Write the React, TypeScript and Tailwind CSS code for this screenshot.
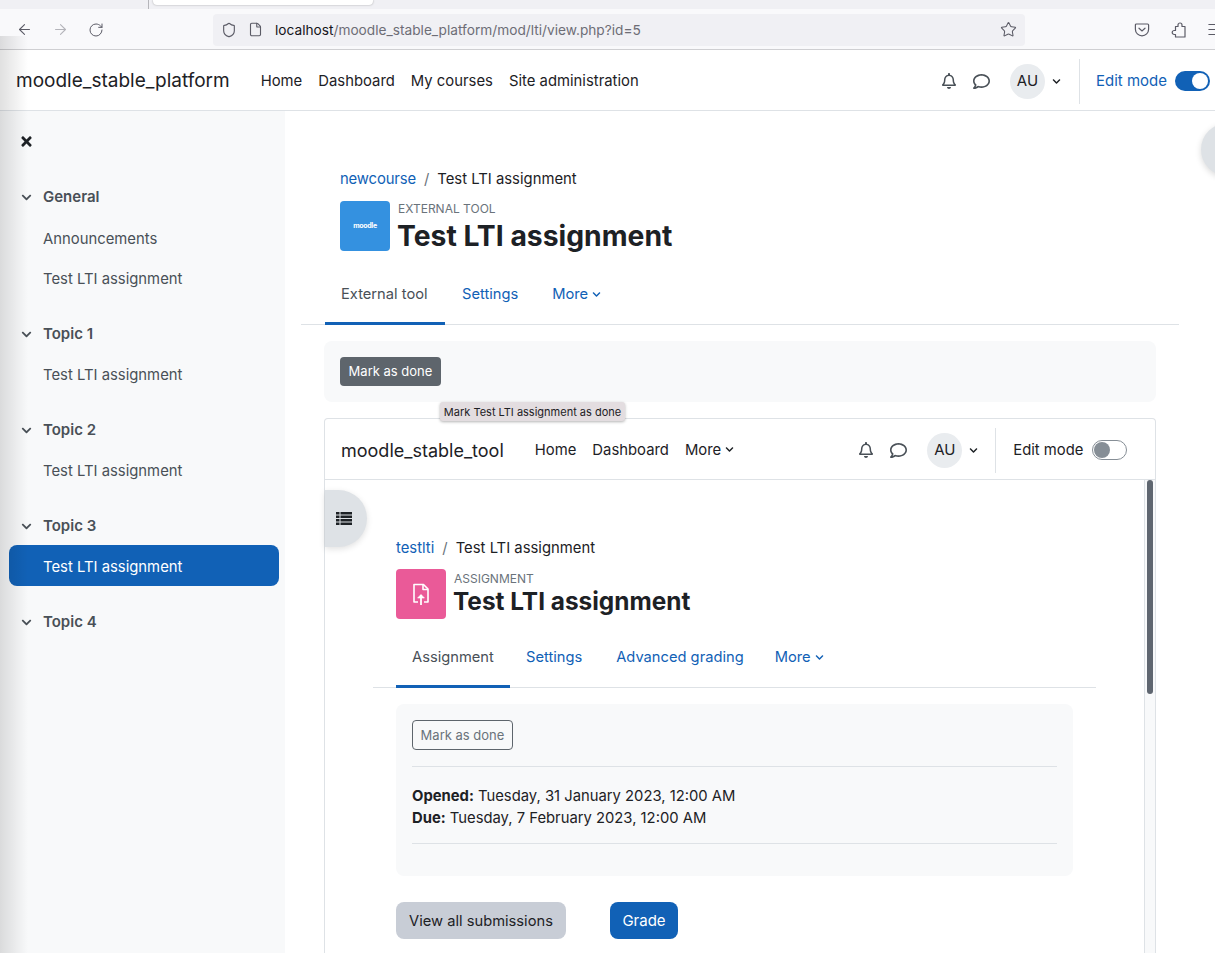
import { ArrowLeft, ArrowRight, File, Menu, RotateCw, Shield, Star } from "lucide-react";
import { FaChevronDown, FaRegBell, FaRegComment, FaTimes } from "react-icons/fa";

const sections = [
  { name: "General", items: ["Announcements", "Test LTI assignment"] },
  { name: "Topic 1", items: ["Test LTI assignment"] },
  { name: "Topic 2", items: ["Test LTI assignment"] },
  { name: "Topic 3", items: ["Test LTI assignment"], active: true },
  { name: "Topic 4", items: [] as string[] },
];

function BrowserBar() {
  return (
    <>
      {/* Tab strip, only the bottom of it is in the picture */}
      <div className="flex h-[9px] bg-[#f0f0f4]">
        <div className="ml-[148px] h-full w-px bg-[#b5b5ba]" />
        <div className="ml-[4px] h-[5px] w-[220px] rounded-b-[4px] bg-white shadow-[0_0_2px_rgba(0,0,0,0.35)]" />
      </div>
      <div className="flex h-[41px] items-center border-b border-[#cfcfd2] bg-[#f9f9fb] pt-px text-[#5b5b66]">
        <ArrowLeft className="ml-[16px] h-[17px] w-[17px] shrink-0" strokeWidth={1.5} />
        <ArrowRight className="ml-[19px] h-[17px] w-[17px] shrink-0 text-[#b4b4ba]" strokeWidth={1.5} />
        <RotateCw className="ml-[19px] h-[16px] w-[16px] shrink-0" strokeWidth={1.5} />
        <div className="ml-[109px] flex h-[32px] w-[812px] shrink-0 items-center rounded-[4px] bg-[#f0f0f4]">
          <Shield className="ml-[8px] h-[16px] w-[16px]" strokeWidth={1.7} />
          <File className="ml-[11px] h-[15px] w-[15px]" strokeWidth={1.8} />
          <span className="ml-[12px] pt-px text-[13.7px] text-[#6d6d76]">
            <span className="text-[#15141a]">localhost</span>/moodle_stable_platform/mod/lti/view.php?id=5
          </span>
          <Star className="ml-auto mr-[8px] h-[17px] w-[17px]" strokeWidth={1.5} />
        </div>
        <svg viewBox="0 0 16 16" className="ml-[109px] h-[16px] w-[16px] shrink-0" fill="none" stroke="currentColor" strokeWidth="1.2">
          <path d="M2.4 2h11.2c.6 0 1 .4 1 1v4.2a6.6 6.6 0 0 1-13.2 0V3c0-.6.4-1 1-1z" />
          <path d="M5 6.2l3 2.8 3-2.8" strokeLinecap="round" />
        </svg>
        <svg viewBox="0 0 16 16" className="ml-[21px] h-[16px] w-[16px] shrink-0" fill="none" stroke="currentColor" strokeWidth="1.2" strokeLinejoin="round">
          <path d="M4.5 4.5H7V3a2 2 0 0 1 4 0v1.5h3V15H4.5v-2.5H3.2a2 2 0 0 1 0-4h1.3z" />
        </svg>
        <Menu className="ml-[19px] h-[17px] w-[17px] shrink-0" strokeWidth={1.5} />
      </div>
    </>
  );
}

function NavIcons() {
  return (
    <>
      <FaRegBell className="h-[16px] w-[16px] text-[#495057]" />
      <FaRegComment className="ml-[16px] h-[17px] w-[17px] text-[#495057]" />
      <div className="ml-[20px] flex h-[35px] w-[35px] items-center justify-center rounded-full bg-[#e9ecef] text-[15px] text-[#1d2125]">
        AU
      </div>
      <FaChevronDown className="ml-[7px] h-[9px] w-[9px] text-[#1d2125]" />
    </>
  );
}

function PageHeader(props: {
  crumb: string;
  crumbClass?: string;
  label: string;
  labelClass: string;
  titleClass: string;
  tile: React.ReactNode;
  tileClass: string;
  headerClass: string;
}) {
  return (
    <>
      <div className="flex h-[22px] items-center pt-[2px] text-[14.85px] text-[#1d2125]">
        <a className={"text-[#1161b6] " + (props.crumbClass ?? "")}>{props.crumb}</a>
        <span className="mx-[8px] text-[#6a737b]">/</span>
        <span>Test LTI assignment</span>
      </div>
      <div className={"flex h-[50px] " + props.headerClass}>
        <div className={"flex h-[50px] w-[50px] items-center justify-center rounded-[4px] " + props.tileClass}>{props.tile}</div>
        <div className={"ml-[8px] flex flex-col " + props.labelClass}>
          <div className="text-[12px] leading-[14px] uppercase text-[#6a737b]">{props.label}</div>
          <h1 className={"-ml-px font-bold text-[#1d2125] " + props.titleClass}>Test LTI assignment</h1>
        </div>
      </div>
    </>
  );
}

function Tab(props: { label: string; active?: boolean; more?: boolean; className?: string }) {
  return (
    <div
      className={
        "flex h-full items-center border-b-[3px] text-[14.7px] " +
        (props.active ? "border-[#1161b6] text-[#495057] " : "border-transparent text-[#1161b6] ") +
        (props.className ?? "")
      }
    >
      {props.label}
      {props.more && <FaChevronDown className="ml-[4px] h-[9px] w-[9px]" />}
    </div>
  );
}

function InnerFrame() {
  return (
    <div className="mt-[16px] ml-[39px] w-[832px] rounded-t-[4px] border border-b-0 border-[#dee2e6]">
      <div className="flex h-[61px] items-center border-b border-[#dee2e6] pt-[2px] text-[14.85px] text-[#1d2125]">
        <span className="ml-[16px] text-[18px]">moodle_stable_tool</span>
        <div className="ml-[31px] flex gap-[16px]">
          <span>Home</span>
          <span>Dashboard</span>
          <span className="flex items-center">
            More
            <FaChevronDown className="ml-[4px] h-[9px] w-[9px]" />
          </span>
        </div>
        <div className="ml-[124px] flex items-center">
          <NavIcons />
        </div>
        <div className="ml-[17px] h-[45px] w-px bg-[#dee2e6]" />
        <span className="ml-[17px]">Edit mode</span>
        <div className="ml-[8px] flex h-[20px] w-[35px] items-center rounded-full border border-[#868e96] bg-white pl-px">
          <div className="h-[16px] w-[16px] rounded-full bg-[#868e96]" />
        </div>
      </div>
      <div className="relative h-[480px]">
        {/* drawer toggle */}
        <div className="absolute left-0 top-[10px] flex h-[57px] w-[42px] items-center justify-center rounded-r-full bg-[#dee2e6] pr-[4px] shadow-[0_2px_6px_rgba(0,0,0,0.12)]">
          <svg viewBox="0 0 16 13" className="h-[13px] w-[16px] fill-[#1d2125]">
            <path d="M0 0h3.5v2.5H0zM4.5 0H16v2.5H4.5zM0 3.5h3.5V6H0zM4.5 3.5H16V6H4.5zM0 7h3.5v2.5H0zM4.5 7H16v2.5H4.5zM0 10.5h3.5V13H0zM4.5 10.5H16V13H4.5z" />
          </svg>
        </div>
        {/* scrollbar */}
        <div className="absolute bottom-0 right-0 top-0 w-[11px] border-l border-[#dee2e6] bg-[#f8f9fa] pl-[2px]">
          <div className="h-[214px] w-[6px] rounded-b-full rounded-t-full bg-[#5f6670]" />
        </div>
        <div className="pt-[56px]">
          <div className="pl-[71px]">
            <PageHeader
              crumb="testlti"
              label="Assignment"
              labelClass="pt-[3px]"
              titleClass="text-[24.4px] leading-[30px]"
              headerClass="mt-[11px]"
              tileClass="bg-[#ea5a98]"
              tile={
                <svg viewBox="0 0 24 24" className="h-[24px] w-[24px]" fill="none" stroke="white" strokeWidth="1.6">
                  <path d="M9 20H5V2.5h9.5L19 7v13h-4" strokeLinejoin="round" />
                  <path d="M14 3v4.5h5" strokeLinejoin="round" />
                  <path d="M12 23v-10" strokeWidth="1.8" />
                  <path d="M8.6 16L12 12.4l3.4 3.6z" fill="white" strokeWidth="0.6" />
                </svg>
              }
            />
          </div>
          <div className="mt-[11px] ml-[48px] w-[723px] border-b border-[#dee2e6]">
            <div className="ml-[23px] flex h-[58px] -mb-px">
              <Tab label="Assignment" active className="w-[114px] pl-[16px]" />
              <Tab label="Settings" className="ml-[16px]" />
              <Tab label="Advanced grading" className="ml-[34px]" />
              <Tab label="More" more className="ml-[31px]" />
            </div>
          </div>
          <div className="mt-[16px] ml-[71px] h-[172px] w-[677px] rounded-[8px] bg-[#f8f9fa] px-[16px] pt-[16px]">
            <div className="flex h-[30px] w-[101px] items-center justify-center rounded-[4px] border border-[#5e656c] pt-px text-[13px] text-[#6a737b]">
              Mark as done
            </div>
            <div className="mt-[16px] border-t border-[#dee2e6] pt-[18px] text-[14.8px] leading-[22px] text-[#1d2125]">
              <div>
                <b>Opened:</b> Tuesday, 31 January 2023, 12:00 AM
              </div>
              <div>
                <b>Due:</b> Tuesday, 7 February 2023, 12:00 AM
              </div>
            </div>
            <div className="mt-[14px] border-t border-[#dee2e6]" />
          </div>
          <div className="mt-[26px] ml-[71px] flex gap-[44px] text-[15px]">
            <div className="flex h-[37px] w-[170px] items-center justify-center rounded-[8px] bg-[#c8cdd6] pt-px text-[14.7px] text-[#1d2125]">
              View all submissions
            </div>
            <div className="flex h-[37px] w-[68px] items-center justify-center rounded-[8px] bg-[#1161b6] pt-px text-white">
              Grade
            </div>
          </div>
        </div>
      </div>
    </div>
  );
}

export default function App() {
  return (
    <div className="relative h-[953px] w-[1215px] overflow-hidden bg-white font-['Inter',sans-serif] antialiased">
      <BrowserBar />

      {/* Top navigation */}
      <div className="flex h-[61px] items-center border-b border-[#dee2e6] bg-white pt-[2px] text-[14.85px] text-[#1d2125]">
        <span className="ml-[16px] text-[19px]">moodle_stable_platform</span>
        <div className="ml-[31px] flex gap-[16px]">
          <span>Home</span>
          <span>Dashboard</span>
          <span>My courses</span>
          <span>Site administration</span>
        </div>
        <div className="ml-auto flex items-center">
          <NavIcons />
        </div>
        <div className="ml-[18px] h-[45px] w-px bg-[#dee2e6]" />
        <span className="ml-[16px] text-[15px] text-[#1161b6]">Edit mode</span>
        <div className="mx-[5px] ml-[8px] flex h-[20px] w-[35px] items-center justify-end rounded-full bg-[#1161b6] pr-[2px]">
          <div className="h-[16px] w-[16px] rounded-full bg-white" />
        </div>
      </div>

      <div className="flex">
        {/* Course index */}
        <aside className="h-[842px] w-[285px] shrink-0 bg-[#f8f9fa] pt-[20px] text-[14.85px]">
          <div className="flex h-[20px] items-center pl-[19px]">
            <FaTimes className="h-[15px] w-[15px] text-[#1d2125]" />
          </div>
          <div className="mt-[25px]">
            {sections.map((s) => (
              <div key={s.name} className="mb-[16px]">
                <div
                  className={
                    "flex items-center pl-[21px] pt-[2px] text-[15px] font-semibold text-[#495057] " +
                    (s.name === "General" ? "h-[41px]" : "h-[40px]")
                  }
                >
                  <FaChevronDown className="h-[11px] w-[11px]" />
                  <span className="ml-[11px]">{s.name}</span>
                </div>
                {s.items.map((item, i) => (
                  <div
                    key={i}
                    className={
                      "mb-[-1px] ml-[9px] flex h-[41px] w-[270px] items-center rounded-[8px] pl-[34px] pt-[3px] " +
                      (s.active ? "bg-[#1161b6] text-white" : "text-[#495057]")
                    }
                  >
                    {item}
                  </div>
                ))}
              </div>
            ))}
          </div>
        </aside>

        {/* Main region */}
        <main className="w-[930px]">
          <div className="pl-[55px] pt-[56px]">
            <PageHeader
              crumb="newcourse"
              crumbClass="tracking-[-0.15px]"
              label="External tool"
              labelClass="pt-px"
              titleClass="mt-[3px] text-[28.3px] leading-[34px]"
              headerClass="mt-[12px]"
              tileClass="bg-[#3491e0]"
              tile={<span className="text-[7px] font-bold tracking-[-0.3px] text-white">moodle</span>}
            />
          </div>
          <div className="mt-[17px] ml-[16px] w-[878px] border-b border-[#dee2e6]">
            <div className="ml-[24px] flex h-[57px] -mb-px">
              <Tab label="External tool" active className="w-[120px] pb-[2px] pl-[16px]" />
              <Tab label="Settings" className="ml-[17px] pb-[2px]" />
              <Tab label="More" more className="ml-[34px] pb-[2px]" />
            </div>
          </div>
          <div className="mt-[16px] ml-[39px] h-[61px] w-[832px] rounded-[8px] bg-[#f8f9fa] p-[16px]">
            <div className="flex h-[29px] w-[101px] items-center justify-center rounded-[4px] bg-[#5e656c] text-[13px] text-white">
              Mark as done
            </div>
          </div>
          <InnerFrame />
        </main>
      </div>

      {/* Tooltip over the frame */}
      <div className="absolute left-[440px] top-[402px] flex h-[19px] w-[185px] items-center justify-center rounded-[3px] bg-[#e3dde0] pt-px text-[11px] text-[#1d2125] shadow-[0_1px_3px_rgba(0,0,0,0.3)]">
        Mark Test LTI assignment as done
      </div>
      {/* Right drawer toggle, cut by the window */}
      <div className="absolute left-[1201px] top-[123px] h-[53px] w-[40px] rounded-l-full bg-[#dee2e6] shadow-[0_2px_6px_rgba(0,0,0,0.15)]" />
      {/* Shadow of the window beside this one */}
      <div className="pointer-events-none absolute bottom-0 left-0 top-[36px] w-[28px] bg-gradient-to-r from-[#0000001f] to-transparent" />
    </div>
  );
}
